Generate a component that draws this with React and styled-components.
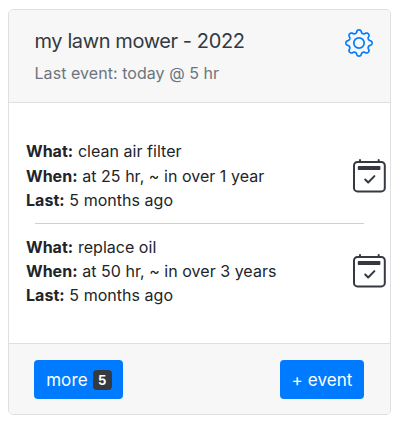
import React from "react";
import styled, { createGlobalStyle } from "styled-components";

const GlobalStyle = createGlobalStyle`
  * { box-sizing: border-box; }
  body {
    margin: 0;
    background: #fff;
    color: #212529;
    font-family: Inter, "Liberation Sans", sans-serif;
    font-size: 16px;
    line-height: 24.4px;
  }
`;

const Card = styled.article`
  display: flex;
  flex-direction: column;
  width: 383px;
  height: 406px;
  margin: 9px 0 0 8px;
  border: 1px solid #dfdfdf;
  border-radius: 5px;
  overflow: hidden;
`;

const Header = styled.header`
  display: flex;
  justify-content: space-between;
  height: 93px;
  padding: 16px 17px 0 25.5px;
  background: #f7f7f7;
  border-bottom: 1px solid #dfdfdf;
`;

const Title = styled.h1`
  margin: 0;
  color: #343a40;
  font-size: 20px;
  font-weight: 400;
  line-height: 30px;
  letter-spacing: -0.4px;
  white-space: nowrap;
`;

const Subtitle = styled.p`
  margin: 5px 0 0;
  color: #6c757d;
  font-size: 16px;
  line-height: 24px;
  letter-spacing: 0.05px;
  white-space: nowrap;
`;

const Icon = styled.svg`
  flex: none;
  fill: none;
  stroke: currentColor;
  stroke-linecap: round;
  stroke-linejoin: round;
`;

const GearDrawing = styled(Icon)`
  width: 28px;
  height: 28px;
  margin-top: 3px;
  color: #007bff;
  stroke-width: 1.7;
`;

const CalendarDrawing = styled(Icon)`
  width: 33px;
  height: 34px;
  color: #343a40;
  stroke-width: 2;
`;

const Body = styled.section`
  height: 240px;
  padding: 36.4px 4px 0 17px;
`;

const Reminder = styled.div`
  display: flex;
  justify-content: space-between;
  align-items: center;
`;

const Details = styled.dl`
  margin: 0;
  white-space: nowrap;
`;

const Detail = styled.div`
  display: flex;
  gap: 4.7px;
  letter-spacing: 0.03px;
`;

const Label = styled.dt`
  font-weight: 700;
`;

const Value = styled.dd`
  margin: 0;
`;

const Divider = styled.hr`
  height: 1px;
  margin: 10.5px 22px 10.4px 9px;
  border: 0;
  background: #cfcfcf;
`;

const Footer = styled.footer`
  display: flex;
  flex: 1;
  justify-content: space-between;
  align-items: flex-start;
  padding: 16px 26px 0 25.4px;
  background: #f7f7f7;
  border-top: 1px solid #dfdfdf;
`;

const Button = styled.button`
  display: flex;
  align-items: center;
  justify-content: center;
  gap: 5px;
  width: ${(p) => p.$width};
  height: 39px;
  padding: 0;
  border: 0;
  border-radius: 4px;
  background: #007bff;
  color: #fff;
  font: 400 17px/24px Inter, "Liberation Sans", sans-serif;
  letter-spacing: 0.1px;
  white-space: nowrap;
`;

const Badge = styled.span`
  width: 19px;
  height: 20px;
  border-radius: 4px;
  background: #343a40;
  font-size: 13px;
  font-weight: 700;
  line-height: 20px;
  text-align: center;
`;

const TEETH = 8;
const gearPoints = Array.from({ length: 256 }, (_, i) => {
  const angle = (i / 256) * Math.PI * 2;
  const wave = Math.tanh(1.5 * Math.cos(TEETH * angle)) / Math.tanh(1.5);
  const radius = 11.6 + 1.45 * wave;
  return `${(14 + radius * Math.sin(angle)).toFixed(2)},${(14 - radius * Math.cos(angle)).toFixed(2)}`;
}).join(" ");

const GearIcon = () => (
  <GearDrawing viewBox="0 0 28 28" aria-hidden="true">
    <polygon points={gearPoints} />
    <circle cx="14" cy="14" r="5.2" />
  </GearDrawing>
);

const CalendarIcon = () => (
  <CalendarDrawing viewBox="0 0 33 34" aria-hidden="true">
    <rect x="1" y="3" width="30.8" height="29.4" rx="3.5" />
    <path d="M7 1v2M25.7 1v2" />
    <rect x="4.8" y="7" width="22.6" height="4" rx="0.8" fill="currentColor" stroke="none" />
    <path d="m12.2 20.5 3 3 6.2-6.4" />
  </CalendarDrawing>
);

const reminders = [
  { what: "clean air filter", when: "at 25 hr, ~ in over 1 year", last: "5 months ago" },
  { what: "replace oil", when: "at 50 hr, ~ in over 3 years", last: "5 months ago" },
];

export default function App() {
  return (
    <>
      <GlobalStyle />
      <Card>
        <Header>
          <div>
            <Title>my lawn mower - 2022</Title>
            <Subtitle>Last event: today @ 5 hr</Subtitle>
          </div>
          <GearIcon />
        </Header>
        <Body>
          {reminders.map((item, index) => (
            <React.Fragment key={item.what}>
              {index > 0 && <Divider />}
              <Reminder>
                <Details>
                  <Detail><Label>What:</Label><Value>{item.what}</Value></Detail>
                  <Detail><Label>When:</Label><Value>{item.when}</Value></Detail>
                  <Detail><Label>Last:</Label><Value>{item.last}</Value></Detail>
                </Details>
                <CalendarIcon />
              </Reminder>
            </React.Fragment>
          ))}
        </Body>
        <Footer>
          <Button $width="89px">more <Badge>5</Badge></Button>
          <Button $width="84px">+ event</Button>
        </Footer>
      </Card>
    </>
  );
}
